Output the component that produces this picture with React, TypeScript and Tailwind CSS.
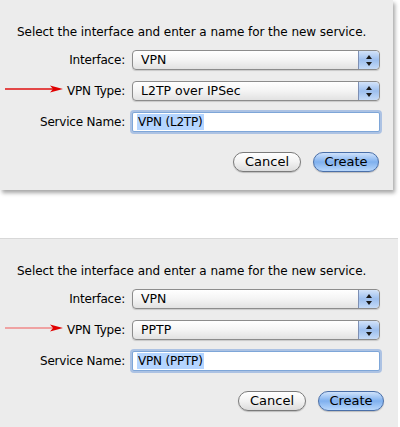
import React from "react";

const font = { fontFamily: '"Lucida Grande", "DejaVu Sans", "Liberation Sans", sans-serif' };

function Stepper() {
  return (
    <div className="flex h-full w-[21px] flex-col items-center justify-center gap-[3px] rounded-r-[4px] border-l border-[#7d8fb3] bg-gradient-to-b from-[#d3e3f9] via-[#9dbfee] to-[#c4daf7]">
      <svg width="6" height="4" viewBox="0 0 6 4">
        <path d="M3 0 L6 4 L0 4 Z" fill="#1a1a1a" />
      </svg>
      <svg width="6" height="4" viewBox="0 0 6 4">
        <path d="M0 0 L6 0 L3 4 Z" fill="#1a1a1a" />
      </svg>
    </div>
  );
}

function Select({ value }: { value: string }) {
  return (
    <div className="flex h-[20px] w-[248px] items-center overflow-hidden rounded-[4px] border border-[#8c8c8c] bg-gradient-to-b from-white via-[#f4f4f4] to-[#e2e2e2] shadow-[0_1px_1px_rgba(0,0,0,0.15)]">
      <span className="flex-1 pl-[8px] text-[12.5px] leading-none tracking-normal text-black">{value}</span>
      <Stepper />
    </div>
  );
}

function Arrow({ faded }: { faded?: boolean }) {
  return (
    <svg className="absolute left-[4px] top-[84px]" width="60" height="10" viewBox="0 0 60 10">
      <line x1="1" y1="5" x2="50" y2="5" stroke={faded ? "#f08a8a" : "#e01010"} strokeWidth="1.3" />
      <path d="M46 1.5 L59 5 L46 8.5 L49 5 Z" fill="#e00000" />
    </svg>
  );
}

function Dialog({
  type,
  name,
  faded,
  className,
}: {
  type: string;
  name: string;
  faded?: boolean;
  className: string;
}) {
  return (
    <div className={`relative bg-[#ececec] pt-[24px] text-[12px] text-black ${className}`} style={font}>
      <Arrow faded={faded} />
      <p className="h-[16px] whitespace-nowrap pl-[17px] leading-[16px] tracking-[-0.05px]">
        Select the interface and enter a name for the new service.
      </p>
      <div className="mt-[10px] grid grid-cols-[125px_1fr] items-center gap-x-[7px] gap-y-[11px] tracking-[-0.2px]">
        <span className="text-right">Interface:</span>
        <Select value="VPN" />
        <span className="text-right">VPN Type:</span>
        <Select value={type} />
        <span className="text-right">Service Name:</span>
        <div className="flex h-[20px] w-[248px] items-center rounded-[2px] border border-[#7ea6d8] bg-white pl-[4px] shadow-[0_0_0_2px_rgba(120,160,220,0.55)]">
          <span className="bg-[#b5d5ff] px-[1px] leading-[16px]">{name}</span>
        </div>
      </div>
      <div className="mt-[20px] flex justify-end gap-[12px] pr-[14px] text-[13px]">
        <button className="flex h-[20px] w-[68px] items-center justify-center rounded-full border border-[#7a7a7a] bg-gradient-to-b from-white via-[#f2f2f2] to-[#dcdcdc] text-black shadow-[0_1px_1px_rgba(0,0,0,0.2)]">
          Cancel
        </button>
        <button className="flex h-[20px] w-[66px] items-center justify-center rounded-full border border-[#4a6fa8] bg-gradient-to-b from-[#cfe2fb] via-[#7fb0ee] to-[#b8d7fb] text-black shadow-[0_1px_1px_rgba(0,0,0,0.2)]">
          Create
        </button>
      </div>
    </div>
  );
}

export default function App() {
  return (
    <div className="flex h-[427px] w-[400px] flex-col overflow-hidden bg-white">
      <Dialog
        type="L2TP over IPSec"
        name="VPN (L2TP)"
        className="h-[190px] w-[393px] shadow-[2px_3px_4px_rgba(0,0,0,0.35)]"
      />
      <Dialog
        type="PPTP"
        name="VPN (PPTP)"
        faded
        className="mt-[48px] h-[189px] w-[398px] border-t border-[#d8d8d8]"
      />
    </div>
  );
}
